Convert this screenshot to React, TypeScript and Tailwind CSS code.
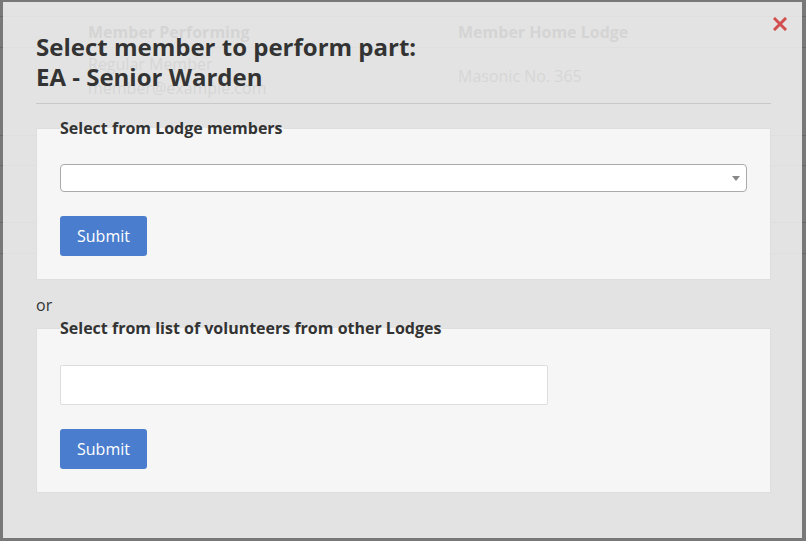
const rows = [
  { h: "h-[88px]", left: ["Regular Member", "member@example.com"], right: "Masonic No. 365" },
  { h: "h-[30px]", left: [], right: "" },
  { h: "h-[57px]", left: [], right: "" },
  { h: "h-[31px]", left: [], right: "" },
];

const SubmitButton = () => (
  <button
    type="button"
    className="mt-6 h-10 w-[87px] rounded-[3px] bg-[#4a7dcd] text-[16px] leading-6 text-white"
  >
    Submit
  </button>
);

export default function App() {
  return (
    <div className="relative h-[541px] w-[806px] overflow-hidden bg-white font-['Open_Sans',sans-serif]">
      {/* page behind the modal */}
      <div className="pt-4">
        <div className="flex h-[32px] items-center border-y border-[#ddd] text-[16px] font-bold text-[#6a6a6a]">
          <div className="w-[458px] pl-[88px]">Member Performing</div>
          <div>Member Home Lodge</div>
        </div>
        {rows.map((r, i) => (
          <div key={i} className={`flex border-b border-[#ddd] text-[16px] text-[#7a7a7a] ${r.h}`}>
            <div className="w-[458px] pl-[88px] pt-[4px] leading-6">
              {r.left.map((t) => (
                <div key={t}>{t}</div>
              ))}
            </div>
            <div className="pt-[16px] leading-6">{r.right}</div>
          </div>
        ))}
      </div>

      {/* backdrop */}
      <div className="absolute inset-0 bg-black/[0.53]" />

      {/* modal */}
      <div className="absolute left-[3px] top-[2px] h-[536px] w-[799px] bg-white/[0.79] pl-[33px] pr-[31px] pt-[30px]">
        <button type="button" className="absolute right-[15px] top-[15px]">
          <svg width="14" height="14" viewBox="0 0 14 14">
            <path d="M2 2 L12 12 M12 2 L2 12" stroke="#d24f4f" strokeWidth="3" strokeLinecap="square" />
          </svg>
        </button>

        <h3 className="text-[24px] font-bold leading-[30px] text-[#333]">
          Select member to perform part:
          <br />
          EA - Senior Warden
        </h3>
        <hr className="mt-[11px] border-t border-[#c9c9c9]" />

        <fieldset className="mt-[12px] border border-[#dedede] bg-[#f6f6f6] px-[23px] pb-[23px] pt-[24px]">
          <legend className="text-[16px] font-bold leading-6 text-[#333]">Select from Lodge members</legend>
          <div className="flex h-[28px] items-center justify-end rounded-[4px] border border-[#aaa] bg-white pr-[6px]">
            <span className="h-0 w-0 border-x-4 border-t-[5px] border-x-transparent border-t-[#888]" />
          </div>
          <SubmitButton />
        </fieldset>

        <p className="mt-[13px] text-[16px] leading-6 text-[#333]">or</p>

        <fieldset className="-mt-px border border-[#dedede] bg-[#f6f6f6] px-[23px] pb-[23px] pt-[25px]">
          <legend className="text-[16px] font-bold leading-6 text-[#333]">
            Select from list of volunteers from other Lodges
          </legend>
          <input type="text" className="block h-10 w-[488px] rounded-[2px] border border-[#ddd] bg-white" />
          <SubmitButton />
        </fieldset>
      </div>
    </div>
  );
}
